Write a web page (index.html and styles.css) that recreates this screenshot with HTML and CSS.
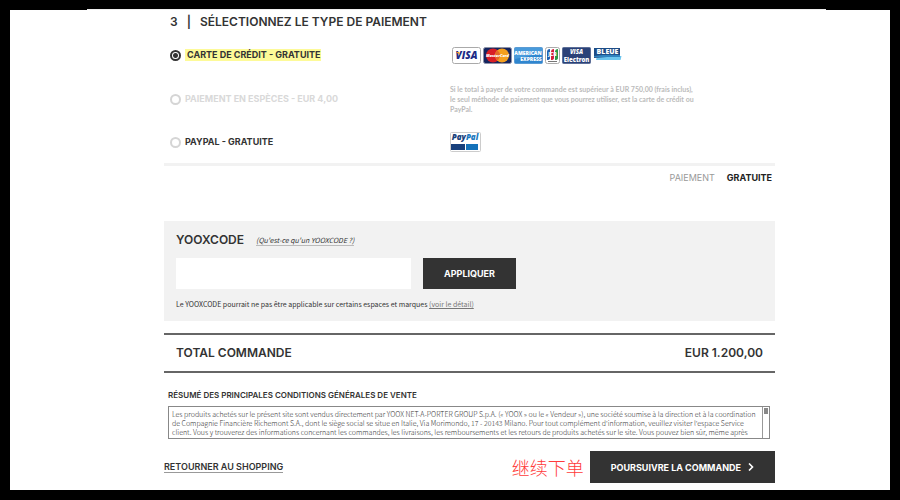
FILE: index.html
```html
<!DOCTYPE html>
<html lang="fr">
<head>
  <meta charset="UTF-8" />
  <meta name="viewport" content="width=device-width, initial-scale=1.0"/>
  <title>YOOX - Paiement</title>
  <link rel="stylesheet" href="styles.css">
</head>
<body>
  <div class="top-line"></div>

  <main class="checkout">
    <!-- Type de paiement -->
    <section class="payment">
      <h1><span>3</span><span>|</span><span>SÉLECTIONNEZ LE TYPE DE PAIEMENT</span></h1>

      <div class="option">
        <div class="choice">
          <input type="radio" name="payment" id="card" checked />
          <label for="card" class="highlight">CARTE DE CRÉDIT - GRATUITE</label>
        </div>
        <div class="logos">
          <svg width="29" height="17" viewBox="0 0 29 17" role="img" aria-label="Visa">
            <rect x="0.5" y="0.5" width="28" height="16" rx="2" fill="#fff" stroke="#aaa"/>
            <text x="14.5" y="12" class="logo-text" font-size="10" font-style="italic" fill="#1d2b86" text-anchor="middle">VISA</text>
            <path d="M4 5h3l1 3z" fill="#f0a020"/>
          </svg>
          <svg width="29" height="17" viewBox="0 0 29 17" role="img" aria-label="MasterCard">
            <rect x="0.5" y="0.5" width="28" height="16" rx="2" fill="#15255f" stroke="#8d93a8"/>
            <circle cx="10" cy="8.5" r="7" fill="#d81f26"/>
            <circle cx="19" cy="8.5" r="7" fill="#f5a01d"/>
            <path d="M14.5 3.2a7 7 0 0 1 0 10.6a7 7 0 0 1 0-10.6z" fill="#e4682a"/>
            <text x="14.5" y="10" class="logo-text" font-size="4" font-style="italic" fill="#fff" text-anchor="middle">MasterCard</text>
          </svg>
          <svg width="29" height="17" viewBox="0 0 29 17" role="img" aria-label="American Express">
            <rect x="0.5" y="0.5" width="28" height="16" rx="1" fill="#2f86cf" stroke="#5a9bd4"/>
            <path d="M1 1h27v5L1 12z" fill="#5aa9e2" opacity="0.6"/>
            <text x="14" y="8" class="logo-text" font-size="5" fill="#fff" text-anchor="middle">AMERICAN</text>
            <text x="17" y="14" class="logo-text" font-size="5" fill="#fff" text-anchor="middle">EXPRESS</text>
          </svg>
          <svg width="15" height="17" viewBox="0 0 15 17" role="img" aria-label="JCB">
            <rect x="0.5" y="0.5" width="14" height="16" rx="2" fill="#fff" stroke="#aaa"/>
            <path d="M2 5q0-3 3-3v9q0 2-3 2z" fill="#1f5fae"/>
            <path d="M6 5q0-3 3-3v9q0 2-3 2z" fill="#d4213d"/>
            <path d="M10 5q0-3 3-3v9q0 2-3 2z" fill="#2c9a48"/>
            <text x="7.5" y="9" class="logo-text" font-size="5" fill="#fff" text-anchor="middle">JCB</text>
            <path d="M3 14.5h9" stroke="#777"/>
          </svg>
          <svg width="29" height="17" viewBox="0 0 29 17" role="img" aria-label="Visa Electron">
            <rect x="0.5" y="0.5" width="28" height="16" rx="1" fill="#2b4278" stroke="#5b6d97"/>
            <text x="14.5" y="7" class="logo-text" font-size="6" font-style="italic" fill="#fff" text-anchor="middle">VISA</text>
            <text x="14.5" y="15" class="logo-text" font-size="6" fill="#fff" text-anchor="middle">Electron</text>
          </svg>
          <svg width="29" height="17" viewBox="0 0 29 17" role="img" aria-label="Carte Bleue">
            <path d="M4 9h24.5l-1 4H3z" fill="#6cc5ee"/>
            <path d="M1 1h26v8L1 11z" fill="#1c4c86"/>
            <path d="M1 9q12-2 26-1v2H1z" fill="#2f83bf"/>
            <text x="14.5" y="7" class="logo-text" font-size="7" fill="#fff" text-anchor="middle">BLEUE</text>
          </svg>
        </div>
      </div>

      <div class="option disabled">
        <div class="choice">
          <input type="radio" name="payment" id="cash" disabled />
          <label for="cash">PAIEMENT EN ESPÈCES - EUR 4,00</label>
        </div>
        <p class="note">Si le total à payer de votre commande est supérieur à EUR 750,00 (frais inclus), le seul méthode de paiement que vous pourrez utiliser, est la carte de crédit ou PayPal.</p>
      </div>

      <div class="option">
        <div class="choice">
          <input type="radio" name="payment" id="paypal" />
          <label for="paypal">PAYPAL - GRATUITE</label>
        </div>
        <div class="paypal-logo">
          <svg width="31" height="20" viewBox="0 0 31 20" role="img" aria-label="PayPal">
            <rect x="0.5" y="0.5" width="30" height="19" rx="1" fill="#fff" stroke="#ccc"/>
            <text x="15" y="8" class="logo-text" font-size="8" font-style="italic" text-anchor="middle"><tspan fill="#173f7c">Pay</tspan><tspan fill="#1b79be">Pal</tspan></text>
            <rect x="1" y="12" width="14" height="6" fill="#173f7c"/>
            <rect x="16" y="12" width="12" height="6" fill="#1472ba"/>
          </svg>
        </div>
      </div>
    </section>

    <div class="payment-cost">
      <span>PAIEMENT</span>
      <strong>GRATUITE</strong>
    </div>

    <!-- Code promo -->
    <form class="yooxcode">
      <div class="yooxcode-head">
        <h2><label for="code">YOOXCODE</label></h2>
        <a href="#">(Qu'est-ce qu'un YOOXCODE ?)</a>
      </div>
      <div class="yooxcode-row">
        <input type="text" id="code" />
        <button type="button">APPLIQUER</button>
      </div>
      <p>Le YOOXCODE pourrait ne pas être applicable sur certains espaces et marques <a href="#">(voir le détail)</a></p>
    </form>

    <div class="total">
      <span>TOTAL COMMANDE</span>
      <span>EUR 1.200,00</span>
    </div>

    <!-- Conditions de vente -->
    <section class="terms">
      <h3>RÉSUMÉ DES PRINCIPALES CONDITIONS GÉNÉRALES DE VENTE</h3>
      <div class="terms-box">
        <p>Les produits achetés sur le présent site sont vendus directement par YOOX NET-A-PORTER GROUP S.p.A. (« YOOX » ou le « Vendeur »), une société soumise à la direction et à la coordination de Compagnie Financière Richemont S.A., dont le siège social se situe en Italie, Via Morimondo, 17 - 20143 Milano. Pour tout complément d'information, veuillez visiter l'espace Service client. Vous y trouverez des informations concernant les commandes, les livraisons, les remboursements et les retours de produits achetés sur le site. Vous pouvez bien sûr, même après</p>
        <div class="rail"><span class="thumb"></span></div>
      </div>
    </section>

    <div class="actions">
      <a href="#">RETOURNER AU SHOPPING</a>
      <div class="next">
        <span class="hint" lang="zh">继续下单</span>
        <button type="button">
          POURSUIVRE LA COMMANDE
          <svg width="6" height="8" viewBox="0 0 6 8" aria-hidden="true">
            <path d="M1 0.5l3.5 3.5L1 7.5" fill="none" stroke="#fff" stroke-width="1.6"/>
          </svg>
        </button>
      </div>
    </div>
  </main>
</body>
</html>
```
FILE: styles.css
```css
:root {
  --dark: #333333;
  --grey: #f2f2f2;
  --title-font: Inter, "Open Sans", sans-serif;
  --text-font: "Noto Sans CJK SC", "Open Sans", sans-serif;
}

* {
  box-sizing: border-box;
}

body {
  margin: 0;
  min-height: 100vh;
  border: 10px solid #000;
  border-top-width: 9px;
  background: #fff;
  color: var(--dark);
  font-family: var(--title-font);
  font-size: 9px;
  line-height: 12px;
}

h1,
h2,
h3,
p {
  margin: 0;
}

a {
  color: inherit;
}

input,
button {
  margin: 0;
  font-family: inherit;
}

button {
  padding: 0 21px;
  border: none;
  background: var(--dark);
  color: #fff;
  font-size: 9px;
  font-weight: 700;
}

.top-line {
  height: 1px;
  border: solid #000;
  border-width: 0 64px 0 77px;
  background: #eee;
}

.checkout {
  padding: 4px 115px 0 154px;
}

.payment {
  padding-left: 6px;
  border-bottom: 3px solid var(--grey);
}

.payment h1 {
  display: flex;
  gap: 9px;
  margin-bottom: 3px;
  font-size: 12px;
  line-height: 16px;
  font-weight: 600;
}

.option {
  display: grid;
  grid-template-columns: 280px 1fr;
  align-items: center;
  height: 44px;
}

.option:last-child {
  height: 42px;
}

.choice {
  display: flex;
  align-items: center;
  gap: 4px;
  font-weight: 700;
}

.choice input {
  appearance: none;
  width: 11px;
  height: 11px;
  border: 2px solid #d5d5d5;
  border-radius: 50%;
  background: #fff;
}

.choice input:checked {
  border-color: var(--dark);
  background: radial-gradient(circle, var(--dark) 2px, #fff 3px);
}

.highlight {
  padding: 0 1px 0 2px;
  background: #fdfa98;
}

.disabled {
  color: #d9d9d9;
}

.logos {
  display: flex;
  gap: 2px;
  padding-left: 2px;
}

.logos svg,
.paypal-logo svg {
  display: block;
}

.logo-text {
  font-family: "Open Sans", sans-serif;
  font-weight: 800;
}

.note {
  max-width: 248px;
  font-family: Lato, sans-serif;
  font-size: 7px;
  line-height: 10px;
  font-weight: 700;
  color: #bbb;
}

.payment-cost {
  display: flex;
  justify-content: flex-end;
  gap: 12px;
  padding: 6px 3px 37px 0;
  color: #999;
}

.payment-cost strong {
  color: #222;
}

.yooxcode {
  padding: 11px 12px 10px;
  background: var(--grey);
}

.yooxcode-head {
  display: flex;
  align-items: center;
  gap: 12px;
}

.yooxcode h2 {
  font-size: 12px;
  line-height: 16px;
  font-weight: 600;
}

.yooxcode-head a {
  border-bottom: 1px solid #bbb;
  font-family: var(--text-font);
  font-size: 7px;
  line-height: 10px;
  font-style: italic;
  text-decoration: none;
}

.yooxcode-row {
  display: flex;
  gap: 12px;
  padding: 10px 0 8px;
}

.yooxcode-row input {
  flex: 0 1 235px;
  min-width: 0;
  height: 31px;
  border: none;
  background: #fff;
}

.yooxcode p {
  font-family: var(--text-font);
  font-size: 7px;
  line-height: 14px;
}

.yooxcode p a {
  color: #777;
}

.total {
  display: flex;
  justify-content: space-between;
  margin-top: 12px;
  padding: 10px 12px;
  border: solid #666;
  border-width: 2px 0;
  font-size: 12px;
  line-height: 16px;
  font-weight: 600;
}

.terms {
  padding: 16px 5px 0 4px;
}

.terms h3 {
  font-size: 8px;
  line-height: 12px;
  font-weight: 600;
}

.terms-box {
  display: flex;
  height: 33px;
  margin-top: 5px;
  border: 1px solid #888;
  overflow: hidden;
  color: #333;
  font-family: var(--text-font);
  font-size: 7px;
  line-height: 9px;
  font-weight: 300;
}

.terms-box p {
  flex: 1;
  padding: 3px 4px 0 3px;
}

.rail {
  width: 7px;
  padding: 1px;
  border-left: 1px solid #999;
}

.thumb {
  display: block;
  width: 4px;
  height: 6px;
  background: #888;
}

.actions {
  display: flex;
  justify-content: space-between;
  align-items: center;
  padding-top: 12px;
}

.actions a {
  border-bottom: 1px solid #999;
  line-height: 10px;
  font-weight: 600;
  text-decoration: none;
}

.next {
  display: flex;
  align-items: center;
  gap: 6px;
}

.hint {
  color: #ff3b3b;
  font-family: "Noto Sans CJK SC", sans-serif;
  font-size: 18px;
  line-height: 24px;
  font-weight: 300;
}

.next button {
  display: flex;
  align-items: center;
  gap: 7px;
  height: 32px;
}
```
